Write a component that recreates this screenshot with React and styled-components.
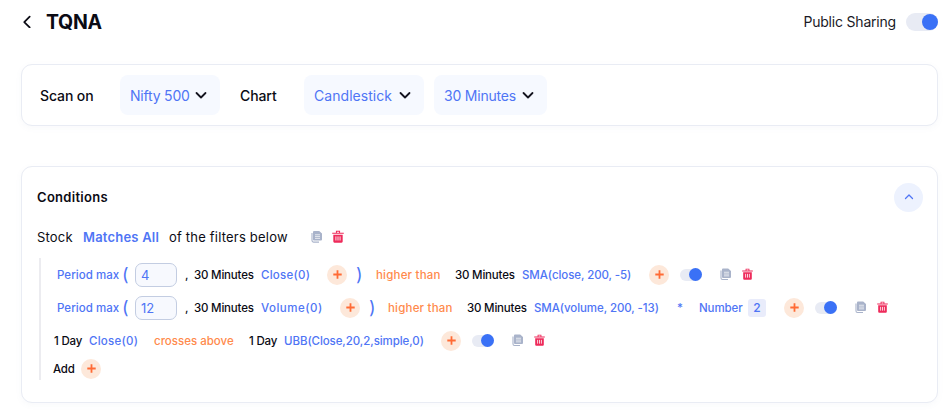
import React from "react";
import styled, { createGlobalStyle } from "styled-components";

const Global = createGlobalStyle`
  html, body { margin: 0; padding: 0; background: #fff; }
  body { font-family: Inter, "Noto Sans", "Liberation Sans", sans-serif; color: #0b0b14; }
`;
const Page = styled.div`
  width: 950px; height: 420px; box-sizing: border-box; padding: 0 12px 0 21px; overflow: hidden;
`;
const Header = styled.header`
  height: 43px; display: flex; align-items: center; justify-content: space-between;
`;
const HeaderLeft = styled.div`display: flex; align-items: center;`;
const Back = styled.span`display: flex; width: 25px; justify-content: flex-start; color: #0b0b14;`;
const Title = styled.h1`margin: 0; font-size: 19.5px; font-weight: 700; line-height: 28px; letter-spacing: -0.3px;`;
const SharingGroup = styled.div`display: flex; align-items: center; gap: 10px;`;
const SharingLabel = styled.span`font-size: 14px; letter-spacing: -0.2px; color: #1a1a26;`;
const Toggle = styled.span`
  display: flex; align-items: center; justify-content: flex-end; border-radius: 99px; background: #e8ebf4;
  width: ${p => (p.$large ? 32 : 22)}px; height: ${p => (p.$large ? 18 : 12)}px; margin-right: ${p => p.$mr || 0}px;
  &::after { content: ""; display: block; border-radius: 50%; background: #3a71f6;
    width: ${p => (p.$large ? 16 : 13)}px; height: ${p => (p.$large ? 16 : 13)}px; }
`;
const Card = styled.section`
  box-sizing: border-box; border: 1px solid #e9ecf4; border-radius: 11px; background: #fff;
  box-shadow: 0 2px 6px rgba(120,130,170,0.05);
`;
const ScanCard = styled(Card)`
  margin-top: 21px; height: 62px; display: flex; align-items: center; padding-left: 18px;
`;
const ScanLabel = styled.span`
  font-size: 14px; font-weight: 500; width: ${p => p.$w}px; letter-spacing: -0.1px;
`;
const Dropdown = styled.div`
  box-sizing: border-box; height: 40px; width: ${p => p.$w}px; margin-right: ${p => p.$mr || 0}px;
  display: flex; align-items: center; justify-content: space-between; padding: 0 13px 0 10px;
  background: #f6f9ff; border-radius: 8px; color: #4f75f5; font-size: 14px; letter-spacing: ${p => p.$ls ?? -0.2}px;
  svg { color: #14141f; flex: none; }
`;
const ConditionsCard = styled(Card)`margin-top: 40px; height: 237px; padding: 0 14px 0 15px;`;
const CondHead = styled.div`height: 60px; display: flex; align-items: center; justify-content: space-between;`;
const CondTitle = styled.h2`margin: 0; font-size: 13px; font-weight: 600; letter-spacing: 0.3px;`;
const Collapse = styled.span`
  width: 29px; height: 29px; border-radius: 50%; background: #edf2fe; color: #4f75f5;
  display: flex; align-items: center; justify-content: center;
`;
const StockLine = styled.div`
  height: 20px; margin-top: 0; display: flex; align-items: center; font-size: 13px; letter-spacing: 0.2px;
`;
const StockText = styled.span`width: ${p => p.$w}px; white-space: nowrap; margin-right: ${p => p.$mr || 0}px;`;
const StockLink = styled(StockText)`color: #4f75f5; font-weight: 600;`;
const Rules = styled.div`margin: 11px 0 0 2px; border-left: 2px solid #ececf0; height: 122px;`;
const Row = styled.div`
  display: flex; align-items: center; height: ${p => p.$h || 33}px; padding-left: ${p => p.$pl}px; font-size: 11.5px; font-weight: 500;
`;
const Tok = styled.span`
  display: block; white-space: nowrap; width: ${p => p.$w}px; margin-right: ${p => p.$mr || 0}px;
`;
const Param = styled(Tok)`color: #4f75f5; letter-spacing: ${p => p.$ls ?? -0.08}px;`;
const Fixed = styled(Tok)`color: #0b0b14; letter-spacing: -0.2px;`;
const Oper = styled(Tok)`color: #ff8a4c; letter-spacing: ${p => p.$ls ?? 0.2}px;`;
const Paren = styled(Tok)`color: #4f75f5; font-size: 18px; font-weight: 400; line-height: 18px;`;
const NumberInput = styled.div`
  box-sizing: border-box; width: 42px; height: 24px; border: 1px solid #c3cde2; border-radius: 7px;
  background: #f7f9fe; color: #4f75f5; font-size: 13px; font-weight: 400; padding-left: 5px; margin-right: 8px;
  display: flex; align-items: center;
`;
const NumChip = styled.span`
  width: 18px; height: 18px; border-radius: 3px; background: #e9ecfb; color: #4f75f5; font-size: 12px;
  display: flex; align-items: center; justify-content: center; margin-right: 18px;
`;
const PlusBtn = styled.span`
  width: 20px; height: 20px; border-radius: 50%; background: #fde8da; flex: none;
  display: flex; align-items: center; justify-content: center; margin-right: ${p => p.$mr || 0}px;
`;
const IconBox = styled.span`display: flex; width: ${p => p.$w}px; margin-right: ${p => p.$mr || 0}px;`;

const Chevron = ({ dir = "down", size = 12, w = 1.8 }) => (
  <svg width={size} height={size} viewBox="0 0 12 12" fill="none" stroke="currentColor" strokeWidth={w} strokeLinecap="round" strokeLinejoin="round">
    {dir === "down" && <path d="M1.5 4l4.5 4.5L10.5 4" />}
    {dir === "up" && <path d="M2.5 7.5L6 4l3.5 3.5" />}
    {dir === "left" && <path d="M8 1.5L3 6.5l5 5" />}
  </svg>
);
const Plus = () => (
  <svg width="9" height="9" viewBox="0 0 9 9"><path d="M4.5.3v8.4M.3 4.5h8.4" stroke="#ff6b35" strokeWidth="1.8" /></svg>
);
const CopyIcon = ({ s = 11 }) => (
  <svg width={s} height={s * 1.1} viewBox="0 0 11 12" fill="#a9b3ca">
    <path d="M3 .5h5.2L11 3v6a1 1 0 0 1-1 1H3a1 1 0 0 1-1-1V1.5a1 1 0 0 1 1-1z" />
    <path d="M1 2.5v7.5a1.5 1.5 0 0 0 1.5 1.5H8" fill="none" stroke="#a9b3ca" strokeWidth="1.1" />
    <path d="M4 4.2h5M4 6h5M4 7.8h5" stroke="#fff" strokeWidth=".7" />
  </svg>
);
const TrashIcon = ({ s = 11 }) => (
  <svg width={s} height={s * 1.1} viewBox="0 0 11 12" fill="#ee2a5a">
    <path d="M.2 2.4h10.6v1H.2zM3.6 2.4V.6h3.8v1.8h-.9v-.9H4.5v.9z" />
    <path d="M1.2 4.2h8.6v6.4a1 1 0 0 1-1 1H2.2a1 1 0 0 1-1-1z" />
    <path d="M3.6 5.8v3.8M5.5 5.8v3.8M7.4 5.8v3.8" stroke="#fff" strokeWidth=".8" />
  </svg>
);

const Actions = ({ mrPlus = 11 }) => (
  <>
    <PlusBtn $mr={mrPlus}><Plus /></PlusBtn>
    <Toggle $mr={18} />
    <IconBox $w={11} $mr={11}><CopyIcon /></IconBox>
    <IconBox $w={11}><TrashIcon /></IconBox>
  </>
);

export default function App() {
  return (
    <Page>
      <Global />
      <Header>
        <HeaderLeft>
          <Back><Chevron dir="left" size={13} w={1.6} /></Back>
          <Title>TQNA</Title>
        </HeaderLeft>
        <SharingGroup>
          <SharingLabel>Public Sharing</SharingLabel>
          <Toggle $large />
        </SharingGroup>
      </Header>

      <ScanCard>
        <ScanLabel $w={80}>Scan on</ScanLabel>
        <Dropdown $w={100} $mr={20}>Nifty 500<Chevron /></Dropdown>
        <ScanLabel $w={64}>Chart</ScanLabel>
        <Dropdown $w={120} $mr={10} $ls={0.05}>Candlestick<Chevron /></Dropdown>
        <Dropdown $w={113}>30 Minutes<Chevron /></Dropdown>
      </ScanCard>

      <ConditionsCard>
        <CondHead>
          <CondTitle>Conditions</CondTitle>
          <Collapse><Chevron dir="up" size={12} w={1.3} /></Collapse>
        </CondHead>
        <StockLine>
          <StockText $w={46}>Stock</StockText>
          <StockLink $w={86}>Matches All</StockLink>
          <StockText $w={142}>of the filters below</StockText>
          <IconBox $w={11} $mr={10}><CopyIcon s={12} /></IconBox>
          <IconBox $w={12}><TrashIcon s={12} /></IconBox>
        </StockLine>
        <Rules>
          <Row $pl={16}>
            <Param $w={65} $ls={0.05}>Period max</Param>
            <Paren $w={13}>(</Paren>
            <NumberInput>4</NumberInput>
            <Fixed $w={9}>,</Fixed>
            <Fixed $w={67}>30 Minutes</Fixed>
            <Param $w={66} $ls={0.25}>Close(0)</Param>
            <PlusBtn $mr={9}><Plus /></PlusBtn>
            <Paren $w={20}>)</Paren>
            <Oper $w={79}>higher than</Oper>
            <Fixed $w={67}>30 Minutes</Fixed>
            <Param $w={127}>SMA(close, 200, -5)</Param>
            <Actions />
          </Row>
          <Row $pl={16}>
            <Param $w={65} $ls={0.05}>Period max</Param>
            <Paren $w={13}>(</Paren>
            <NumberInput>12</NumberInput>
            <Fixed $w={9}>,</Fixed>
            <Fixed $w={67}>30 Minutes</Fixed>
            <Param $w={79} $ls={0.5}>Volume(0)</Param>
            <PlusBtn $mr={9}><Plus /></PlusBtn>
            <Paren $w={19}>)</Paren>
            <Oper $w={79}>higher than</Oper>
            <Fixed $w={67}>30 Minutes</Fixed>
            <Param $w={143}>SMA(volume, 200, -13)</Param>
            <Param $w={22}>*</Param>
            <Param $w={49}>Number</Param>
            <NumChip>2</NumChip>
            <Actions />
          </Row>
          <Row $pl={13}>
            <Fixed $w={35}>1 Day</Fixed>
            <Param $w={65} $ls={0.25}>Close(0)</Param>
            <Oper $w={95} $ls={0}>crosses above</Oper>
            <Fixed $w={35}>1 Day</Fixed>
            <Param $w={157}>UBB(Close,20,2,simple,0)</Param>
            <Actions />
          </Row>
          <Row $pl={12} $h={23}>
            <Fixed $w={28}>Add</Fixed>
            <PlusBtn><Plus /></PlusBtn>
          </Row>
        </Rules>
      </ConditionsCard>
    </Page>
  );
}
